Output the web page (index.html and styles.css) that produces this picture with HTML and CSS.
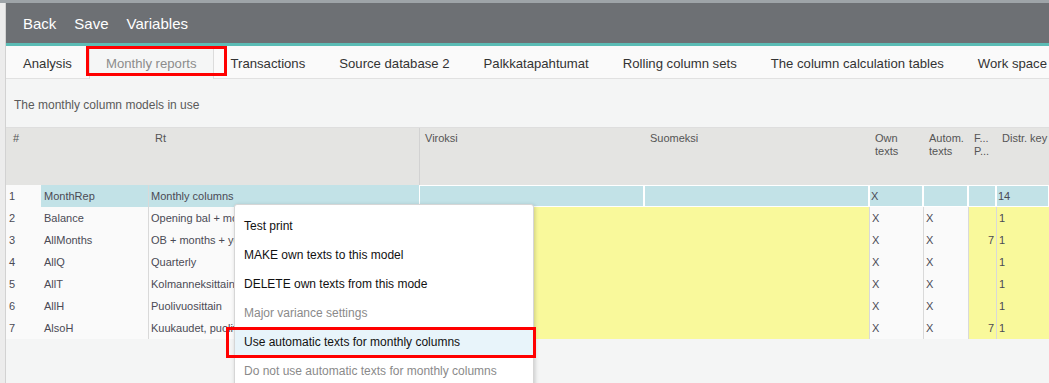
FILE: index.html
```html
<!DOCTYPE html>
<html>
<head>
<meta charset="utf-8">
<link rel="stylesheet" href="styles.css">
</head>
<body>
<div class="topstrip"></div>
<div class="app">
  <div class="toolbar">
    <span class="tool">Back</span>
    <span class="tool">Save</span>
    <span class="tool">Variables</span>
  </div>
  <div class="tabs">
    <span class="tab">Analysis</span>
    <span class="tab active">Monthly reports</span>
    <span class="tab">Transactions</span>
    <span class="tab">Source database 2</span>
    <span class="tab">Palkkatapahtumat</span>
    <span class="tab">Rolling column sets</span>
    <span class="tab">The column calculation tables</span>
    <span class="tab">Work space</span>
  </div>
  <div class="content">
    <div class="caption">The monthly column models in use</div>
    <div class="grid">
      <div class="hc">#</div>
      <div class="hc"></div>
      <div class="hc">Rt</div>
      <div class="hc sep">Viroksi</div>
      <div class="hc">Suomeksi</div>
      <div class="hc">Own<br>texts</div>
      <div class="hc">Autom.<br>texts</div>
      <div class="hc">F...<br>P...</div>
      <div class="hc">Distr. key</div>

      <div class="c w">1</div>
      <div class="c b">MonthRep</div>
      <div class="c b bl">Monthly columns</div>
      <div class="c b inp"></div>
      <div class="c b inp"></div>
      <div class="c b inp">X</div>
      <div class="c b inp"></div>
      <div class="c b inp"></div>
      <div class="c b inp">14</div>

      <div class="c w">2</div><div class="c w">Balance</div><div class="c w bl">Opening bal + months</div><div class="c y"></div><div class="c y"></div><div class="c w bl">X</div><div class="c w bl">X</div><div class="c y bl r"></div><div class="c y bl">1</div>
      <div class="c w">3</div><div class="c w">AllMonths</div><div class="c w bl">OB + months + year</div><div class="c y"></div><div class="c y"></div><div class="c w bl">X</div><div class="c w bl">X</div><div class="c y bl r">7</div><div class="c y bl">1</div>
      <div class="c w">4</div><div class="c w">AllQ</div><div class="c w bl">Quarterly</div><div class="c y"></div><div class="c y"></div><div class="c w bl">X</div><div class="c w bl">X</div><div class="c y bl r"></div><div class="c y bl">1</div>
      <div class="c w">5</div><div class="c w">AllT</div><div class="c w bl">Kolmanneksittain</div><div class="c y"></div><div class="c y"></div><div class="c w bl">X</div><div class="c w bl">X</div><div class="c y bl r"></div><div class="c y bl">1</div>
      <div class="c w">6</div><div class="c w">AllH</div><div class="c w bl">Puolivuosittain</div><div class="c y"></div><div class="c y"></div><div class="c w bl">X</div><div class="c w bl">X</div><div class="c y bl r"></div><div class="c y bl">1</div>
      <div class="c w">7</div><div class="c w">AlsoH</div><div class="c w bl">Kuukaudet, puolivuodet</div><div class="c y"></div><div class="c y"></div><div class="c w bl">X</div><div class="c w bl">X</div><div class="c y bl r">7</div><div class="c y bl">1</div>
    </div>
  </div>
</div>

<div class="menu">
  <div class="mi">Test print</div>
  <div class="mi">MAKE own texts to this model</div>
  <div class="mi">DELETE own texts from this mode</div>
  <div class="mi dis">Major variance settings</div>
  <div class="mi hl">Use automatic texts for monthly columns</div>
  <div class="mi dis">Do not use automatic texts for monthly columns</div>
</div>

<div class="mark mark-tab"></div>
<div class="mark mark-item"></div>
</body>
</html>
```
FILE: styles.css
```css
* { box-sizing: border-box; }
html, body { height: 100%; }
body {
  margin: 0;
  background: #ececec;
  font-family: "Liberation Sans", Arial, sans-serif;
  overflow: hidden;
  position: relative;
}
.topstrip { height: 3px; background: #9ea4a8; }
.app {
  margin-left: 5px;
  border-left: 1px solid #d2d2d2;
  height: calc(100% - 3px);
  background: #f4f5f5;
}
.toolbar {
  height: 43px;
  background: #6d7074;
  border-bottom: 3px solid #5bbcb5;
  display: flex;
  align-items: center;
  gap: 18px;
  padding-left: 17px;
  color: #fff;
  font-size: 15px;
}
.tabs {
  height: 33px;
  display: flex;
  background: #fafafa;
  border-bottom: 1px solid #e1e1e1;
  font-size: 13.15px;
  color: #333;
}
.tab {
  padding: 3px 17px 0;
  line-height: 29px;
  white-space: nowrap;
}
.tab.active {
  color: #8c8c8c;
  background: #f5f6f6;
  border-left: 1px solid #dcdcdc;
  border-right: 1px solid #dcdcdc;
  padding: 3px 16px 0;
  height: 33px;
}
.caption {
  height: 48px;
  padding: 17px 0 0 8px;
  font-size: 12px;
  line-height: 18px;
  color: #5a5a5a;
}
.grid {
  display: grid;
  grid-template-columns: 35px 107px 271px 225px 225px 54px 45px 28px 1fr;
  grid-template-rows: 57px;
  grid-auto-rows: 22px;
  border-top: 1px solid #dedede;
  font-size: 11px;
  color: #4a4a55;
}
.hc {
  background: #e4e4e2;
  padding: 4px 6px 0;
  line-height: 13px;
  color: #555;
  white-space: nowrap;
  overflow: hidden;
}
.hc:nth-child(1) { padding-left: 7px; }
.hc:nth-child(3) { padding-left: 7px; }
.hc.sep { border-left: 1px solid #d2d2d2; padding-left: 5px; }
.c {
  line-height: 22px;
  padding-left: 3px;
  white-space: nowrap;
  overflow: hidden;
}
.c.w { background: #fafafa; }
.c.b { background: #c2e2e7; }
.c.y { background: #f9f99b; }
.c.bl { border-left: 1px solid #d9d9d9; padding-left: 2px; }
.c.inp { border: 1px solid #fff; line-height: 20px; padding-left: 1px; }
.c.r { text-align: right; padding-right: 2px; }

.menu {
  position: absolute;
  left: 234px;
  top: 204px;
  width: 300px;
  height: 200px;
  background: #fff;
  border: 1px solid #d6d6d6;
  border-radius: 3px;
  box-shadow: 1px 1px 4px rgba(0,0,0,0.18);
  padding-top: 7px;
  font-size: 12px;
  color: #111;
}
.mi {
  height: 29px;
  line-height: 29px;
  padding-left: 9px;
  white-space: nowrap;
}
.mi.dis { color: #8a8a8a; }
.mi.hl { background: #e8f4fa; }
.mark {
  position: absolute;
  border: 3px solid #ff0000;
}
.mark-tab { left: 86px; top: 46px; width: 141px; height: 30px; }
.mark-item { left: 226px; top: 327px; width: 310px; height: 31px; }
```
